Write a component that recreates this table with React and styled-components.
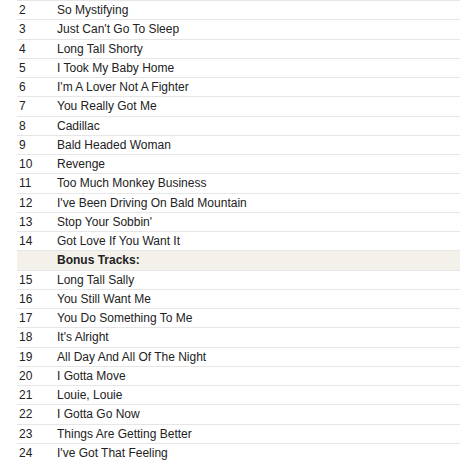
import React from 'react';
import styled, { createGlobalStyle } from 'styled-components';

const GlobalStyle = createGlobalStyle`
  html, body {
    margin: 0;
    padding: 0;
    background: #fff;
  }
  body {
    font-family: "Liberation Sans", Arial, sans-serif;
    color: #222;
    overflow: hidden;
  }
`;

const List = styled.div`
  padding-left: 17px;
  width: 443px;
`;

const Row = styled.div`
  box-sizing: border-box;
  display: flex;
  align-items: center;
  height: 19.25px;
  border-top: 1px solid #e6e6e6;
  background: ${(p) => (p.$header ? '#f3f1ea' : '#fff')};
  font-size: 12px;
  font-weight: ${(p) => (p.$header ? 700 : 400)};
`;

const Num = styled.span`
  width: 38px;
  padding-left: 2px;
`;

const Title = styled.span`
  flex: 1;
  white-space: nowrap;
`;

const tracks = [
  [2, 'So Mystifying'],
  [3, "Just Can't Go To Sleep"],
  [4, 'Long Tall Shorty'],
  [5, 'I Took My Baby Home'],
  [6, "I'm A Lover Not A Fighter"],
  [7, 'You Really Got Me'],
  [8, 'Cadillac'],
  [9, 'Bald Headed Woman'],
  [10, 'Revenge'],
  [11, 'Too Much Monkey Business'],
  [12, "I've Been Driving On Bald Mountain"],
  [13, "Stop Your Sobbin'"],
  [14, 'Got Love If You Want It'],
  [null, 'Bonus Tracks:'],
  [15, 'Long Tall Sally'],
  [16, 'You Still Want Me'],
  [17, 'You Do Something To Me'],
  [18, "It's Alright"],
  [19, 'All Day And All Of The Night'],
  [20, 'I Gotta Move'],
  [21, 'Louie, Louie'],
  [22, 'I Gotta Go Now'],
  [23, 'Things Are Getting Better'],
  [24, "I've Got That Feeling"],
];

export default function App() {
  return (
    <>
      <GlobalStyle />
      <List>
        {tracks.map(([n, title]) => (
          <Row key={title} $header={n === null}>
            <Num>{n}</Num>
            <Title>{title}</Title>
          </Row>
        ))}
      </List>
    </>
  );
}
